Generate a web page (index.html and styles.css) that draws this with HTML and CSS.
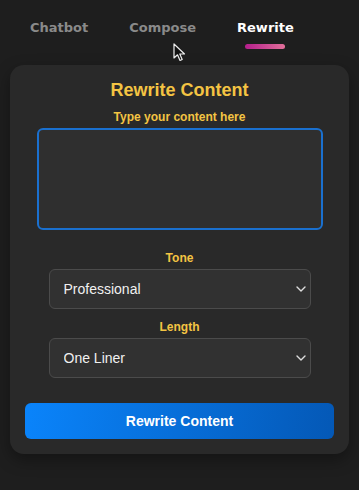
FILE: index.html
```html
<!DOCTYPE html>
<html lang="en">

<head>
    <meta charset="UTF-8">
    <meta name="viewport" content="width=device-width, initial-scale=1.0">
    <title>Rewrite</title>
    <link rel="stylesheet" href="styles.css">
</head>

<body>
    <div class="tabs">
        <a href="#" class="tab">Chatbot</a>
        <a href="#" class="tab">Compose</a>
        <a href="#" class="tab active">Rewrite</a>
        <svg class="cursor" width="14" height="20" viewBox="0 0 14 20">
            <path d="M1 1 L1 15 L4.5 11.8 L7 17.5 L9.2 16.5 L6.8 11 L11.5 11 Z" fill="#111" stroke="#eee" stroke-width="1.2" stroke-linejoin="round" />
        </svg>
    </div>

    <div class="card">
        <h1>Rewrite Content</h1>
        <label class="label" for="content">Type your content here</label>
        <textarea id="content" class="content-input"></textarea>

        <label class="label tone-label" for="tone">Tone</label>
        <div class="select-wrap">
            <select id="tone">
                <option>Professional</option>
                <option>Casual</option>
                <option>Friendly</option>
            </select>
            <svg class="chevron" width="10" height="6" viewBox="0 0 10 6">
                <path d="M1 1 L5 5 L9 1" fill="none" stroke="#ddd" stroke-width="1.4" stroke-linecap="round" stroke-linejoin="round" />
            </svg>
        </div>

        <label class="label length-label" for="length">Length</label>
        <div class="select-wrap">
            <select id="length">
                <option>One Liner</option>
                <option>Short</option>
                <option>Long</option>
            </select>
            <svg class="chevron" width="10" height="6" viewBox="0 0 10 6">
                <path d="M1 1 L5 5 L9 1" fill="none" stroke="#ddd" stroke-width="1.4" stroke-linecap="round" stroke-linejoin="round" />
            </svg>
        </div>

        <button class="submit">Rewrite Content</button>
    </div>
</body>

</html>
```

FILE: styles.css
```css
* {
    margin: 0;
    padding: 0;
    box-sizing: border-box;
}

body {
    background-color: #1e1e1e;
    font-family: 'Liberation Sans', Arial, sans-serif;
    height: 490px;
    overflow: hidden;
}

.tabs {
    position: relative;
    display: flex;
    gap: 41px;
    padding: 19px 0 0 30px;
    height: 65px;
}

.tab {
    position: relative;
    font-family: 'DejaVu Sans', Verdana, sans-serif;
    font-size: 13px;
    font-weight: bold;
    line-height: 18px;
    color: #8a8a8a;
    text-decoration: none;
}

.tab.active {
    color: #ffffff;
}

.tab.active::after {
    content: '';
    position: absolute;
    left: 50%;
    top: 25px;
    width: 40px;
    height: 5px;
    margin-left: -20px;
    border-radius: 3px;
    background: linear-gradient(to right, #b41e8c, #e2709a);
}

.cursor {
    position: absolute;
    left: 173px;
    top: 43px;
}

.card {
    display: flex;
    flex-direction: column;
    align-items: center;
    margin: 0 10px;
    height: 389px;
    padding: 14px 15px 15px;
    background-color: #292929;
    border-radius: 14px;
    box-shadow: 0 6px 16px rgba(0, 0, 0, 0.35);
}

h1 {
    font-size: 18px;
    line-height: 22px;
    font-weight: bold;
    color: #f4c443;
}

.label {
    display: block;
    margin-top: 9px;
    font-size: 12px;
    line-height: 14px;
    font-weight: bold;
    color: #f4c443;
}

.content-input {
    display: block;
    width: 286px;
    height: 102px;
    margin-top: 4px;
    background-color: #2f2f2f;
    border: 2px solid #1a70cf;
    border-radius: 6px;
    color: #fff;
    resize: none;
    outline: none;
}

.tone-label {
    margin-top: 21px;
}

.length-label {
    margin-top: 11px;
}

.select-wrap {
    position: relative;
    width: 262px;
    margin-top: 4px;
}

select {
    appearance: none;
    -webkit-appearance: none;
    display: block;
    width: 100%;
    height: 40px;
    padding: 0 14px;
    background-color: #313131;
    border: 1px solid #4b4b4b;
    border-radius: 6px;
    color: #f0f0f0;
    font-family: 'Liberation Sans', Arial, sans-serif;
    font-size: 14px;
    outline: none;
}

.chevron {
    position: absolute;
    right: 5px;
    top: 17px;
}

.submit {
    width: 309px;
    height: 36px;
    margin-top: 25px;
    border: none;
    border-radius: 6px;
    background: linear-gradient(100deg, #0a84fb, #0458b6);
    color: #ffffff;
    font-family: 'Liberation Sans', Arial, sans-serif;
    font-size: 14px;
    font-weight: bold;
    cursor: pointer;
}
```
